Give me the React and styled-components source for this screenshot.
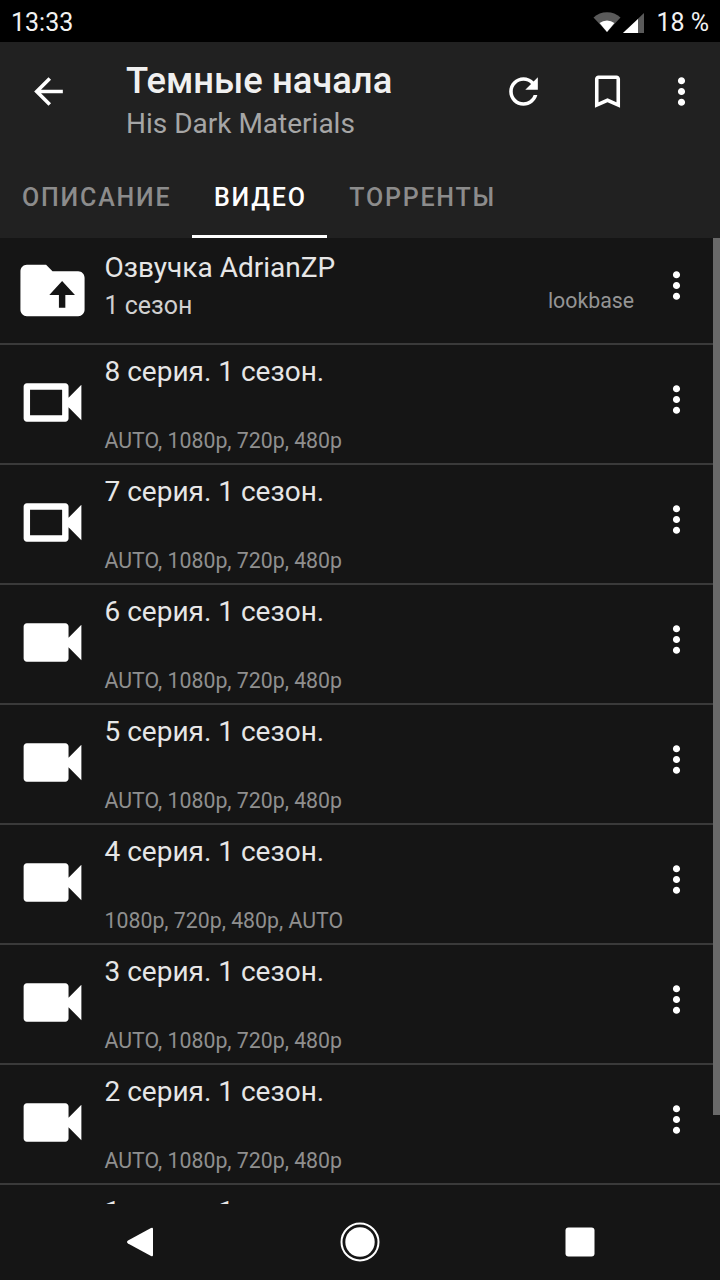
import styled, { createGlobalStyle } from "styled-components";

const GlobalStyle = createGlobalStyle`
  html, body {
    margin: 0;
    padding: 0;
    background: #151515;
  }
  * {
    box-sizing: border-box;
  }
`;

const Screen = styled.div`
  width: 720px;
  height: 1280px;
  display: flex;
  flex-direction: column;
  overflow: hidden;
  background: #151515;
  font-family: Roboto, "Noto Sans", sans-serif;
`;

const StatusBar = styled.div`
  height: 42px;
  flex: none;
  background: #000;
  color: #f2f2f2;
  display: flex;
  align-items: center;
  justify-content: space-between;
  padding: 2px 11px 0 11px;
  font-size: 25px;
`;

const StatusRight = styled.div`
  display: flex;
  align-items: center;
`;

const Battery = styled.span`
  margin-left: 10px;
`;

const AppBar = styled.div`
  flex: none;
  height: 196px;
  background: #212121;
  display: flex;
  flex-direction: column;
`;

const Toolbar = styled.div`
  height: 112px;
  display: flex;
  align-items: flex-start;
  padding: 0 17px 0 27px;
`;

const BarIcon = styled.svg`
  width: 43px;
  height: 43px;
  flex: none;
  margin-top: 28px;
  margin-left: ${(p) => p.$left || 0}px;
  fill: #fff;
`;

const TitleBlock = styled.div`
  flex: 1;
  margin-left: 56px;
  padding-top: 18px;
`;

const Title = styled.div`
  font-size: 36.4px;
  font-weight: 500;
  line-height: 42px;
  color: #f0f0f0;
`;

const Subtitle = styled.div`
  font-size: 28px;
  line-height: 40px;
  margin-top: 2px;
  color: #a6a6a6;
`;

const Tabs = styled.div`
  flex: 1;
  display: flex;
`;

const Tab = styled.div`
  padding: 26px 20.5px 0 22px;
  font-size: 25px;
  font-weight: 500;
  line-height: 36px;
  letter-spacing: 1.8px;
  color: ${(p) => (p.$active ? "#fff" : "#8c8c8c")};
  border-bottom: 3px solid ${(p) => (p.$active ? "#fff" : "transparent")};
`;

const List = styled.div`
  position: relative;
  flex: 1;
  min-height: 0;
  overflow: hidden;
`;

const Scrollbar = styled.div`
  position: absolute;
  top: 0;
  right: 0;
  width: 7px;
  height: 877px;
  background: #696969;
`;

const Row = styled.div`
  height: ${(p) => p.$height}px;
  display: flex;
  padding: 0 44px 0 14px;
  border-bottom: 2px solid #3a3a3a;
`;

const RowIcon = styled.svg`
  width: 77px;
  height: 77px;
  flex: none;
  align-self: center;
  margin-top: ${(p) => p.$top}px;
  fill: #fff;
`;

const RowText = styled.div`
  flex: 1;
  min-width: 0;
  margin-left: 13.5px;
  padding-top: ${(p) => p.$top || 0}px;
  display: flex;
  flex-direction: column;
`;

const RowTitle = styled.div`
  font-size: 28px;
  line-height: 34px;
  margin-top: 10px;
  color: #e6e6e6;
`;

const RowSeason = styled.div`
  font-size: 25px;
  line-height: 32px;
  margin-top: 5px;
  color: #d0d0d0;
`;

const RowQuality = styled.div`
  margin-top: auto;
  margin-bottom: 8px;
  font-size: 21.3px;
  line-height: 28px;
  color: #8f8f8f;
`;

const Provider = styled.div`
  align-self: center;
  margin: 20px 21px 0 0;
  font-size: 21.3px;
  color: #949494;
`;

const RowMenu = styled.svg`
  width: 43px;
  height: 43px;
  flex: none;
  align-self: center;
  margin: 0 -22px 0 0;
  transform: translateY(-5px);
  fill: #fff;
`;

const NavBar = styled.div`
  flex: none;
  height: 76px;
  background: #151515;
  display: flex;
  align-items: center;
`;

const NavSlot = styled.div`
  flex: none;
  width: 220px;
  margin-left: ${(p) => p.$left}px;
  display: flex;
  justify-content: center;
`;

const ARROW = "M20 11H7.83l5.59-5.59L12 4l-8 8 8 8 1.41-1.41L7.83 13H20v-2z";
const REFRESH =
  "M17.65 6.35C16.2 4.9 14.21 4 12 4c-4.42 0-7.99 3.58-7.99 8s3.57 8 7.99 8c3.73 0 6.84-2.55 7.73-6h-2.08c-.82 2.33-3.04 4-5.65 4-3.31 0-6-2.69-6-6s2.69-6 6-6c1.66 0 3.14.69 4.22 1.78L13 11h7V4l-2.35 2.35z";
const BOOKMARK =
  "M17 3H7c-1.1 0-1.99.9-1.99 2L5 21l7-3 7 3V5c0-1.1-.9-2-2-2zm0 15l-5-2.18L7 18V5h10v13z";
const DOTS =
  "M12 8c1.1 0 2-.9 2-2s-.9-2-2-2-2 .9-2 2 .9 2 2 2zm0 2c-1.1 0-2 .9-2 2s.9 2 2 2 2-.9 2-2-.9-2-2-2zm0 6c-1.1 0-2 .9-2 2s.9 2 2 2 2-.9 2-2-.9-2-2-2z";
const FOLDER_UP =
  "M20 6h-8l-2-2H4c-1.1 0-1.99.9-1.99 2L2 18c0 1.1.9 2 2 2h16c1.1 0 2-.9 2-2V8c0-1.1-.9-2-2-2zM15 9l4 4.4h-3v4h-2v-4h-3L15 9z";
const CAM_FILLED =
  "M17 10.5V7c0-.55-.45-1-1-1H4c-.55 0-1 .45-1 1v10c0 .55.45 1 1 1h12c.55 0 1-.45 1-1v-3.5l4 4v-11l-4 4z";
const CAM_OUTLINE = CAM_FILLED + "M15 16H5V8h10v8z";

const episodes = [
  { n: 8, quality: "AUTO, 1080p, 720p, 480p", seen: true },
  { n: 7, quality: "AUTO, 1080p, 720p, 480p", seen: true },
  { n: 6, quality: "AUTO, 1080p, 720p, 480p" },
  { n: 5, quality: "AUTO, 1080p, 720p, 480p" },
  { n: 4, quality: "1080p, 720p, 480p, AUTO" },
  { n: 3, quality: "AUTO, 1080p, 720p, 480p" },
  { n: 2, quality: "AUTO, 1080p, 720p, 480p" },
  { n: 1 },
];

function App() {
  return (
    <Screen>
      <GlobalStyle />
      <StatusBar>
        <span>13:33</span>
        <StatusRight>
          <svg width="54" height="24" viewBox="0 0 54 24">
            <path d="M1.5 7.5 A20 20 0 0 1 28.5 7.5 L15 22 Z" fill="#5a5a5a" />
            <path d="M7.6 13 A12 12 0 0 1 22.4 13 L15 22 Z" fill="#fff" />
            <path d="M52 3 V23 H31 Z" fill="#5a5a5a" />
            <path d="M46 9 V23 H31 Z" fill="#fff" />
          </svg>
          <Battery>18 %</Battery>
        </StatusRight>
      </StatusBar>

      <AppBar>
        <Toolbar>
          <BarIcon viewBox="0 0 24 24">
            <path d={ARROW} />
          </BarIcon>
          <TitleBlock>
            <Title>Темные начала</Title>
            <Subtitle>His Dark Materials</Subtitle>
          </TitleBlock>
          <BarIcon viewBox="0 0 24 24">
            <path d={REFRESH} />
          </BarIcon>
          <BarIcon viewBox="0 0 24 24" $left={41}>
            <path d={BOOKMARK} />
          </BarIcon>
          <BarIcon viewBox="0 0 24 24" $left={31}>
            <path d={DOTS} />
          </BarIcon>
        </Toolbar>
        <Tabs>
          <Tab>ОПИСАНИЕ</Tab>
          <Tab $active>ВИДЕО</Tab>
          <Tab>ТОРРЕНТЫ</Tab>
        </Tabs>
      </AppBar>

      <List>
        <Row $height={107}>
          <RowIcon viewBox="0 0 24 24" $top={0}>
            <path fillRule="evenodd" d={FOLDER_UP} />
          </RowIcon>
          <RowText $top={3}>
            <RowTitle>Озвучка AdrianZP</RowTitle>
            <RowSeason>1 сезон</RowSeason>
          </RowText>
          <Provider>lookbase</Provider>
          <RowMenu viewBox="0 0 24 24">
            <path d={DOTS} />
          </RowMenu>
        </Row>
        {episodes.map((ep) => (
          <Row key={ep.n} $height={120}>
            <RowIcon viewBox="0 0 24 24" $top={-4}>
              <path fillRule="evenodd" d={ep.seen ? CAM_OUTLINE : CAM_FILLED} />
            </RowIcon>
            <RowText>
              <RowTitle>{ep.n} серия. 1 сезон.</RowTitle>
              {ep.quality && <RowQuality>{ep.quality}</RowQuality>}
            </RowText>
            <RowMenu viewBox="0 0 24 24">
              <path d={DOTS} />
            </RowMenu>
          </Row>
        ))}
        <Scrollbar />
      </List>

      <NavBar>
        <NavSlot $left={30}>
          <svg width="30" height="32" viewBox="0 0 30 32">
            <path d="M28 3 V29 Q28 31 26 30 L3 17.5 Q1 16 3 14.5 L26 2 Q28 1 28 3 Z" fill="#fff" />
          </svg>
        </NavSlot>
        <NavSlot $left={0}>
          <svg width="40" height="40" viewBox="0 0 40 40">
            <circle cx="20" cy="20" r="18.5" fill="none" stroke="#fff" strokeWidth="2" />
            <circle cx="20" cy="20" r="14.7" fill="#fff" />
          </svg>
        </NavSlot>
        <NavSlot $left={0}>
          <svg width="30" height="30" viewBox="0 0 30 30">
            <rect x="0.5" y="0.5" width="29" height="29" rx="3" fill="#fff" />
          </svg>
        </NavSlot>
      </NavBar>
    </Screen>
  );
}

export default App;
